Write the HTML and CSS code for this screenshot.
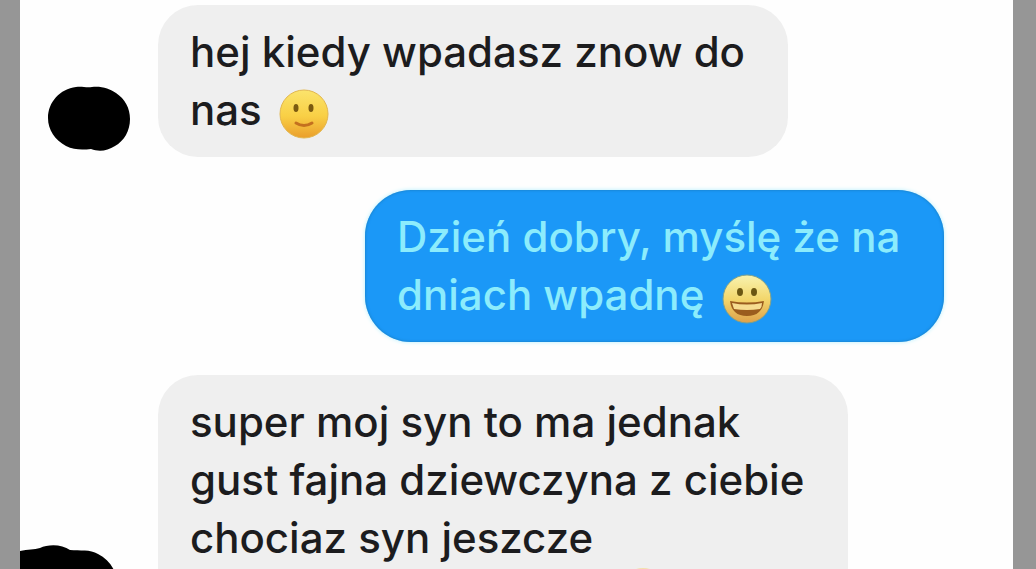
FILE: index.html
```
<!DOCTYPE html>
<html lang="pl">
<head>
    <meta charset="UTF-8">
    <meta name="viewport" content="width=device-width, initial-scale=1.0">
    <title>Czat</title>
    <link rel="stylesheet" href="styles.css">
</head>
<body>
    <main class="chat">
        <div class="row">
            <div class="side">
                <svg class="avatar" width="84" height="66" viewBox="0 0 84 66">
                    <path d="M28 1C34 0 38 2 44 1C54 0 62 3 68 7C77 13 82 22 82 33C82 45 76 55 67 60C59 65 51 66 43 63C34 64 26 64 18 60C7 54 0 44 0 32C0 16 12 3 28 1Z" fill="#000"/>
                </svg>
            </div>
            <div class="bubble">
                hej kiedy wpadasz znow do<br>
                nas
                <svg class="emoji" viewBox="0 0 50 50" role="img" aria-label="🙂">
                    <defs>
                        <linearGradient id="face" x1="0" y1="0" x2="0" y2="1">
                            <stop offset="0" stop-color="#fbe46c"/>
                            <stop offset="0.55" stop-color="#f9cf45"/>
                            <stop offset="1" stop-color="#ea9e2c"/>
                        </linearGradient>
                    </defs>
                    <circle cx="25" cy="25" r="24" fill="url(#face)" stroke="#e2b750" stroke-width="1"/>
                    <ellipse cx="17" cy="19" rx="2.5" ry="4" fill="#7b5a10"/>
                    <ellipse cx="32" cy="19" rx="2.5" ry="4" fill="#7b5a10"/>
                    <path d="M17 34Q25 39 33 34" fill="none" stroke="#c4701f" stroke-width="3" stroke-linecap="round"/>
                </svg>
            </div>
        </div>

        <div class="row mine">
            <div class="bubble">
                Dzień dobry, myślę że na<br>
                dniach wpadnę
                <svg class="emoji" viewBox="0 0 50 50" role="img" aria-label="😀">
                    <defs>
                        <linearGradient id="grin" x1="0" y1="0" x2="0" y2="1">
                            <stop offset="0" stop-color="#f8f3b0"/>
                            <stop offset="0.5" stop-color="#f3d76c"/>
                            <stop offset="1" stop-color="#dda04a"/>
                        </linearGradient>
                    </defs>
                    <circle cx="25" cy="25" r="24" fill="url(#grin)" stroke="#7da08c" stroke-width="1"/>
                    <ellipse cx="18" cy="18" rx="3" ry="4" fill="#6b5712"/>
                    <ellipse cx="32" cy="18" rx="3" ry="4" fill="#6b5712"/>
                    <path d="M8 27Q25 30 42 27Q40 42 25 42Q10 42 8 27Z" fill="#9a5c1e"/>
                    <path d="M10 29Q25 32 40 29Q40 33 38 35Q25 37 12 35Z" fill="#f6dc90"/>
                </svg>
            </div>
        </div>

        <div class="row">
            <div class="side">
                <svg class="avatar big" width="98" height="90" viewBox="0 0 98 90">
                    <path d="M0 6C8 4 14 5 20 3C28 -1 42 -1 50 5C60 6 70 4 78 9C90 15 98 27 98 44C98 70 80 90 50 90H0Z" fill="#000"/>
                </svg>
            </div>
            <div class="bubble wide">
                super moj syn to ma jednak<br>
                gust fajna dziewczyna z ciebie<br>
                chociaz syn jeszcze<br>
                <svg class="emoji last" viewBox="0 0 50 50" role="img" aria-label="🙂">
                    <circle cx="25" cy="25" r="24" fill="#f3dfa8"/>
                </svg>
            </div>
        </div>
    </main>
</body>
</html>
```
FILE: styles.css
```
* {
    box-sizing: border-box;
}
body {
    margin: 0;
    height: 100vh;
    overflow: hidden;
    background-color: #969696;
    font-family: 'Inter', 'Liberation Sans', sans-serif;
}
.chat {
    display: flex;
    flex-direction: column;
    gap: 33px;
    min-height: 100vh;
    margin: 0 23px 0 20px;
    padding-top: 5px;
    background-color: #fefefe;
}
.row {
    display: flex;
    align-items: flex-end;
}
.side {
    width: 138px;
    flex-shrink: 0;
}
.avatar {
    display: block;
    margin: 0 0 5px 28px;
}
.avatar.big {
    margin: 0 0 8px;
}
.bubble {
    width: 630px;
    padding: 18px 0 18px 32px;
    border-radius: 40px;
    background-color: #efefef;
    color: #1c1c1e;
    font-size: 42px;
    font-weight: 450;
    line-height: 58px;
    white-space: nowrap;
}
.bubble.wide {
    width: 690px;
}
.mine {
    justify-content: flex-end;
    padding-right: 69px;
}
.mine .bubble {
    width: 579px;
    border-radius: 46px;
    background-color: #1b98f7;
    color: #8cecfc;
    box-shadow: 0 0 4px #b4f0ff, inset 0 0 3px #1878b8;
}
.emoji {
    width: 50px;
    height: 50px;
    margin-left: 6px;
    vertical-align: middle;
}
.emoji.last {
    margin-left: 428px;
    vertical-align: top;
}
```
